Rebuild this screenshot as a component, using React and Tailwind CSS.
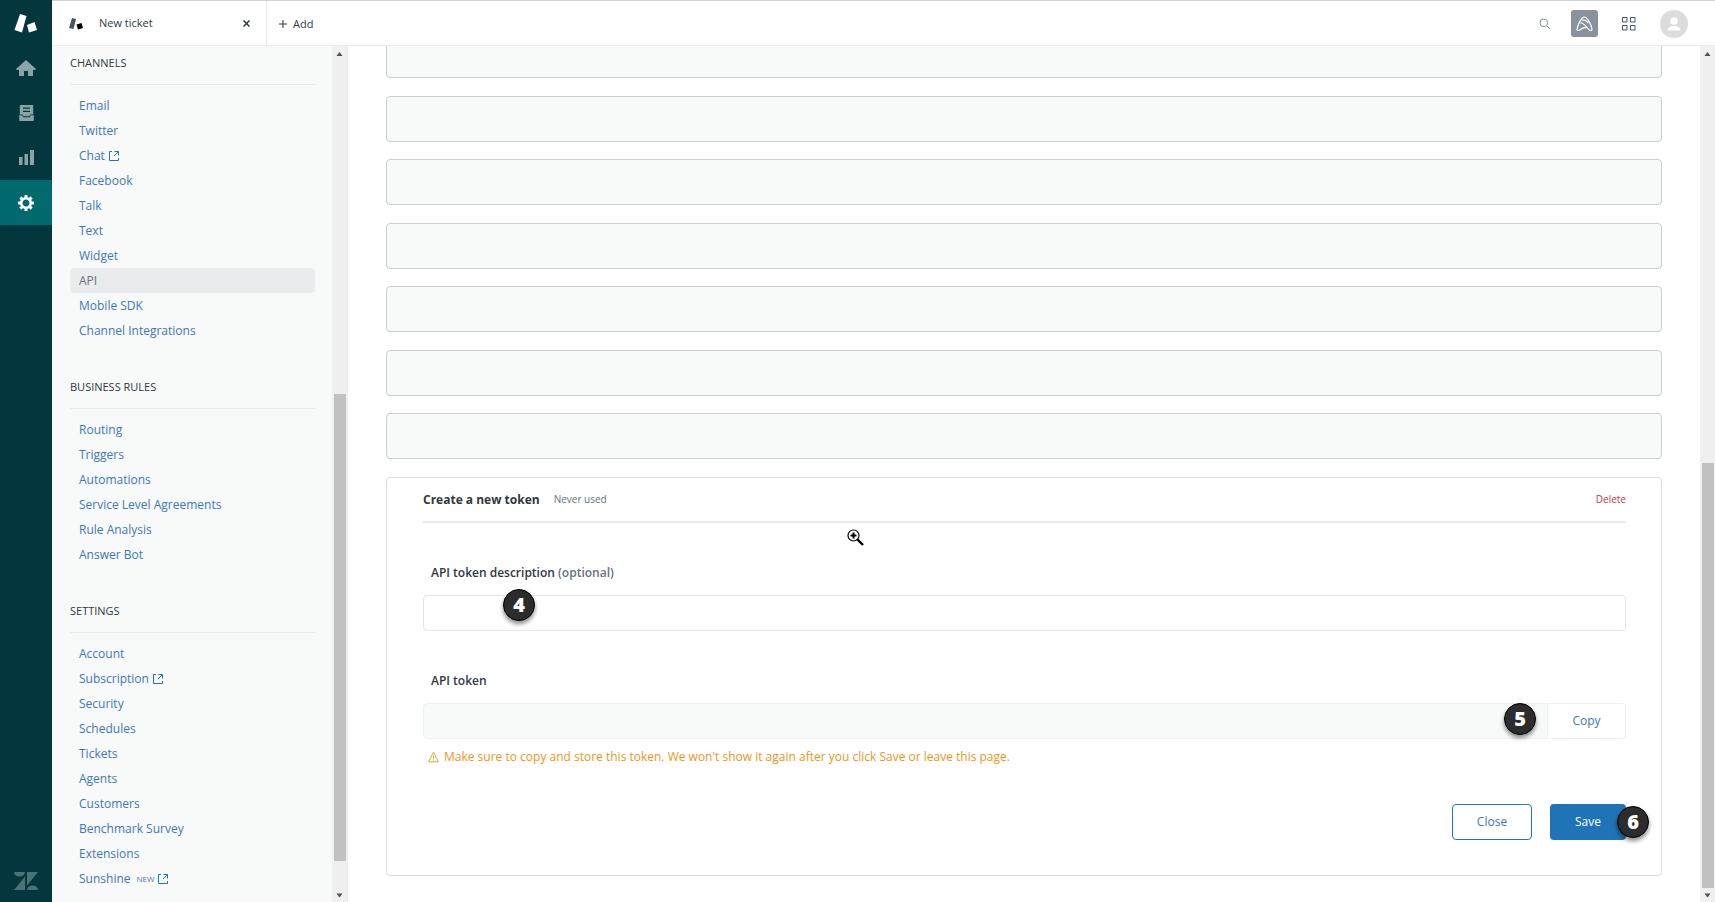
const channels = ['Email','Twitter','Chat','Facebook','Talk','Text','Widget','API','Mobile SDK','Channel Integrations']
const rules = ['Routing','Triggers','Automations','Service Level Agreements','Rule Analysis','Answer Bot']
const settings = ['Account','Subscription','Security','Schedules','Tickets','Agents','Customers','Benchmark Survey','Extensions','Sunshine']
const external = ['Chat','Subscription','Sunshine']

function ExternalIcon() {
  return (
    <svg width="10" height="10" viewBox="0 0 10 10" fill="none" stroke="currentColor" className="shrink-0 text-[#1f73b7]">
      <path d="M3 .5H.5v9h9V7M5.500.5h4v4M9.300.7 5 5" />
    </svg>
  )
}

function NavSection({ title, items }) {
  return (
    <section className="mb-[32px]">
      <h2 className="flex h-[34px] items-center border-b border-[#e9ebed] pb-[8px] text-[11px] text-[#2f3941]">{title}</h2>
      <ul className="mt-2">
        {items.map((item) => (
          <li key={item} className="h-[25px]">
            <a
              href="#"
              className={
                item === 'API'
                  ? 'flex h-[25px] items-center gap-1 rounded-sm bg-[#e9ebed] px-[9px] text-[12px] text-[#68737d]'
                  : 'flex h-[25px] items-center gap-1 px-[9px] text-[12px] text-[#3d78b8]'
              }
            >
              {item}
              {item === 'Sunshine' && <span className="ml-[2px] text-[8px]">NEW</span>}
              {external.includes(item) && <ExternalIcon />}
            </a>
          </li>
        ))}
      </ul>
    </section>
  )
}

function Scrollbar({ children }) {
  return (
    <div className="flex w-[15px] shrink-0 flex-col items-center bg-[#f0f0f0] text-[#505050]" aria-hidden="true">
      <svg width="15" height="17" viewBox="0 0 15 17"><path d="M4.500 10h6l-3-4z" fill="currentColor" /></svg>
      {children}
      <svg width="15" height="14" viewBox="0 0 15 14"><path d="M4.500 5.500h6l-3 4z" fill="currentColor" /></svg>
    </div>
  )
}

function ZoomCursor() {
  return (
    <svg width="17" height="17" viewBox="0 0 17 17" fill="none" stroke="#000" className="absolute top-[51px] left-[424px]" aria-hidden="true">
      <circle cx="6.500" cy="6.500" r="5.500" fill="#fff" strokeWidth="1.200" />
      <path d="M6.500 3.500v6M3.500 6.500h6" strokeWidth="2" />
      <path d="m10.500 10.500 5.500 5.500" strokeWidth="2.400" />
    </svg>
  )
}

function Step({ children, className }) {
  return (
    <span
      className={`absolute flex size-[32px] items-center justify-center rounded-full border border-black bg-[#2c2c2c] text-[20px] font-extrabold text-white shadow-[0_3px_4px_rgba(0,0,0,0.45)] ${className}`}
    >
      {children}
    </span>
  )
}

export default function App() {
  return (
    <div className="flex h-screen overflow-hidden bg-white font-['Open_Sans','Noto_Sans',sans-serif] text-[12px] text-[#2f3941]">
      <nav className="flex w-[52px] shrink-0 flex-col bg-[#03363d] text-[#8aa3a6]" aria-label="Main">
        <a href="#" aria-label="Support" className="flex h-[45px] items-center justify-center">
          <svg width="24" height="20" viewBox="0 0 24 20" fill="#fff"><path d="M6 1 12.500 3 8 19.500.5 17zM13 12 20.500 9 23 17 15 19.500z" /></svg>
        </a>
        <a href="#" aria-label="Home" className="flex h-[45px] items-center justify-center">
          <svg width="20" height="16" viewBox="0 0 20 16" fill="currentColor"><path d="M10 0 0 9l1 1h2v6h5v-5h4v5h5v-6h2l1-1z" /></svg>
        </a>
        <a href="#" aria-label="Views" className="flex h-[45px] items-center justify-center">
          <svg width="15" height="16" viewBox="0 0 15 16" fill="currentColor"><path fillRule="evenodd" d="M1.500 0h12q.7 0 .7.700V9.500H11.500L10.500 11.200H4.500L3.500 9.500H.8V.7Q.8 0 1.500 0zM4 2.400v1.400h7V2.400zM4 5.700v1.400h7V5.700zM.2 10.200h2.900l1.200 2h6.400l1.200-2h2.900V15.300q0 .7-.7.700H.9q-.7 0-.7-.7z" /></svg>
        </a>
        <a href="#" aria-label="Reporting" className="flex h-[45px] items-center justify-center">
          <svg width="15" height="15" viewBox="0 0 15 15" fill="currentColor"><path d="M0 7h3.500v8H0zM5.500 4H9v11H5.500zM11 0h4v15h-4z" /></svg>
        </a>
        <a href="#" aria-label="Admin" className="flex h-[45px] items-center justify-center bg-[#02696e] text-white">
          <svg width="16" height="16" viewBox="-8 -8 16 16" fill="none" stroke="currentColor">
            <circle r="4.800" strokeWidth="2.600" />
            <path strokeWidth="3" d="M0-8v3M0 8V5M-8 0h3M8 0H5M-5.600-5.600l2 2M5.600 5.600l-2-2M-5.600 5.600l2-2M5.600-5.600l-2 2" />
          </svg>
        </a>
        <a href="#" aria-label="Zendesk" className="mt-auto flex h-[43px] items-center justify-center text-[#4a7377]">
          <svg width="24" height="18" viewBox="0 0 24 18" fill="currentColor"><path d="M0 0h11a5.500 4.500 0 0 1-11 0zM11 4.500V18H0zM13 0h11L13 13.500zM13 18a5.500 4.500 0 0 1 11 0z" /></svg>
        </a>
      </nav>

      <div className="flex min-w-0 flex-1 flex-col">
        <header className="flex h-[46px] shrink-0 items-stretch border-t border-b border-t-[#d0d3d4] border-b-[#e9ebed]">
          <div className="flex w-[215px] items-center border-r border-[#e9ebed] pt-px pr-4 pl-[17px]">
            <svg width="14" height="12" viewBox="0 0 14 12"><path d="M3 0 7 1 4.500 11 0 10z" fill="#49545c" /><path d="M7.500 6.500 12.500 5 14 10 9 11.500z" fill="#000" /></svg>
            <span className="ml-4 flex-1 text-[11px]">New ticket</span>
            <button type="button" aria-label="Close tab">
              <svg width="7" height="7" viewBox="0 0 7 7" stroke="#2f3941" strokeWidth="1.500"><path d="m.5.5 6 6M6.500.5l-6 6" /></svg>
            </button>
          </div>
          <button type="button" className="flex items-center gap-[6px] px-3 pt-[2px] text-[11px]">
            <svg width="8" height="8" viewBox="0 0 8 8" stroke="#2f3941"><path d="M4 0v8M0 4h8" /></svg>
            Add
          </button>
          <div className="ml-auto flex items-center pt-px pr-[27px]">
            <button type="button" aria-label="Search">
              <svg width="12" height="12" viewBox="0 0 12 12" fill="none" stroke="#87929d"><circle cx="4.800" cy="4.800" r="3.800" /><path d="m7.600 7.600 3.600 3.600" /></svg>
            </button>
            <button type="button" aria-label="App" className="ml-5 flex size-[27px] items-center justify-center rounded-[3px] bg-[#87929d]">
              <svg width="17" height="16" viewBox="0 0 17 16" fill="none" stroke="#fff" strokeWidth="1.200" strokeLinecap="round" strokeLinejoin="round"><path d="M1 13C2 8 5.500 1 8.300 1S15 8 16 13C16.200 14.900 14.500 15 13.200 14 10.500 10.500 8.500 7.500 4 6.500M1 13C.9 15 3 14.800 4.500 13.500 6 12 8 11.300 11 11.300M5.800 3.800C8 3.800 10.500 4.500 12 6.500" /></svg>
            </button>
            <button type="button" aria-label="Products" className="ml-6">
              <svg width="14" height="14" viewBox="0 0 14 14" fill="none" stroke="#49545c"><path d="M.5.5h4.500V5H.5zM8.500.5H13V5H8.500zM.5 8.500h4.500V13H.5zM8.500 8.500H13V13H8.500z" /></svg>
            </button>
            <button type="button" aria-label="Profile" className="ml-6">
              <svg width="28" height="28" viewBox="0 0 28 28"><circle cx="14" cy="14" r="14" fill="#dcdcdc" /><circle cx="14" cy="11" r="3.800" fill="#fff" /><path d="M7.500 20.500c0-3 2.500-4.500 6.500-4.500s6.500 1.500 6.500 4.500z" fill="#fff" /></svg>
            </button>
          </div>
        </header>

        <div className="flex min-h-0 flex-1">
          <aside className="flex w-[296px] shrink-0 border-r border-[#e9ebed] bg-[#f8f9f9]">
            <div className="min-w-0 flex-1 overflow-hidden pt-[5px] pr-[17px] pl-[18px]">
              <NavSection title="CHANNELS" items={channels} />
              <NavSection title="BUSINESS RULES" items={rules} />
              <NavSection title="SETTINGS" items={settings} />
            </div>
            <Scrollbar>
              <div className="mt-[331px] mb-[27px] w-3 flex-1 bg-[#c1c1c1]" />
            </Scrollbar>
          </aside>

          <main className="min-w-0 flex-1 overflow-hidden px-[38px]">
            <ul className="-mt-[14px]">
              {[1, 2, 3, 4, 5, 6, 7].map((n) => (
                <li key={n} className="h-[46px] rounded border border-[#c9cfd3] bg-[#f8f9f9] odd:mb-[18px] even:mb-[17px]" />
              ))}
            </ul>
            <form className="rounded border border-[#d8dcde] pr-[35px] pb-[35px] pl-9">
              <div className="relative flex h-[45px] items-center border-b-2 border-[#e9ebed]">
                <h1 className="text-[12px] font-bold">Create a new token</h1>
                <span className="ml-[14px] text-[10px] text-[#68737d]">Never used</span>
                <button type="button" className="ml-auto text-[10px] text-[#cc3340]">Delete</button>
                <ZoomCursor />
              </div>
              <label htmlFor="description" className="mt-10 block px-2 leading-5 font-semibold">
                API token description <span className="text-[#68737d]">(optional)</span>
              </label>
              <div className="relative mt-3">
                <input id="description" type="text" className="block h-[36px] w-full rounded-sm border border-[#e4e6e8] px-3" />
                <Step className="-top-[6px] left-[80px]">4</Step>
              </div>
              <label htmlFor="token" className="mt-10 block px-2 leading-5 font-semibold">API token</label>
              <div className="relative mt-3 flex h-[36px]">
                <input id="token" type="text" readOnly className="min-w-0 flex-1 rounded-l-sm border border-[#eef0f1] bg-[#f8f9f9] px-3" />
                <button type="button" className="w-[78px] rounded-r-sm border border-l-0 border-[#eef0f1] text-[#3d78b8]">Copy</button>
                <Step className="top-0 right-[90px]">5</Step>
              </div>
              <p className="mt-2 flex items-center gap-[5px] pl-[5px] leading-5 text-[#ed961c]">
                <svg width="11" height="12" viewBox="0 0 12 12" fill="none" stroke="currentColor" strokeLinejoin="round"><path d="M6 .7.7 11.300h10.600zM6 4.500v3.300M6 8.800v1.200" /></svg>
                Make sure to copy and store this token. We won't show it again after you click Save or leave this page.
              </p>
              <div className="relative mt-[37px] flex justify-end gap-[18px]">
                <button type="button" className="h-9 w-20 rounded border border-[#1f73b7] text-[#3d78b8]">Close</button>
                <button type="submit" className="h-9 w-[76px] rounded bg-[#1f73b7] text-white">Save</button>
                <Step className="top-[2px] -right-[23px]">6</Step>
              </div>
            </form>
          </main>
          <Scrollbar>
            <div className="mt-[400px] w-3 flex-1 bg-[#c1c1c1]" />
          </Scrollbar>
        </div>
      </div>
    </div>
  )
}
